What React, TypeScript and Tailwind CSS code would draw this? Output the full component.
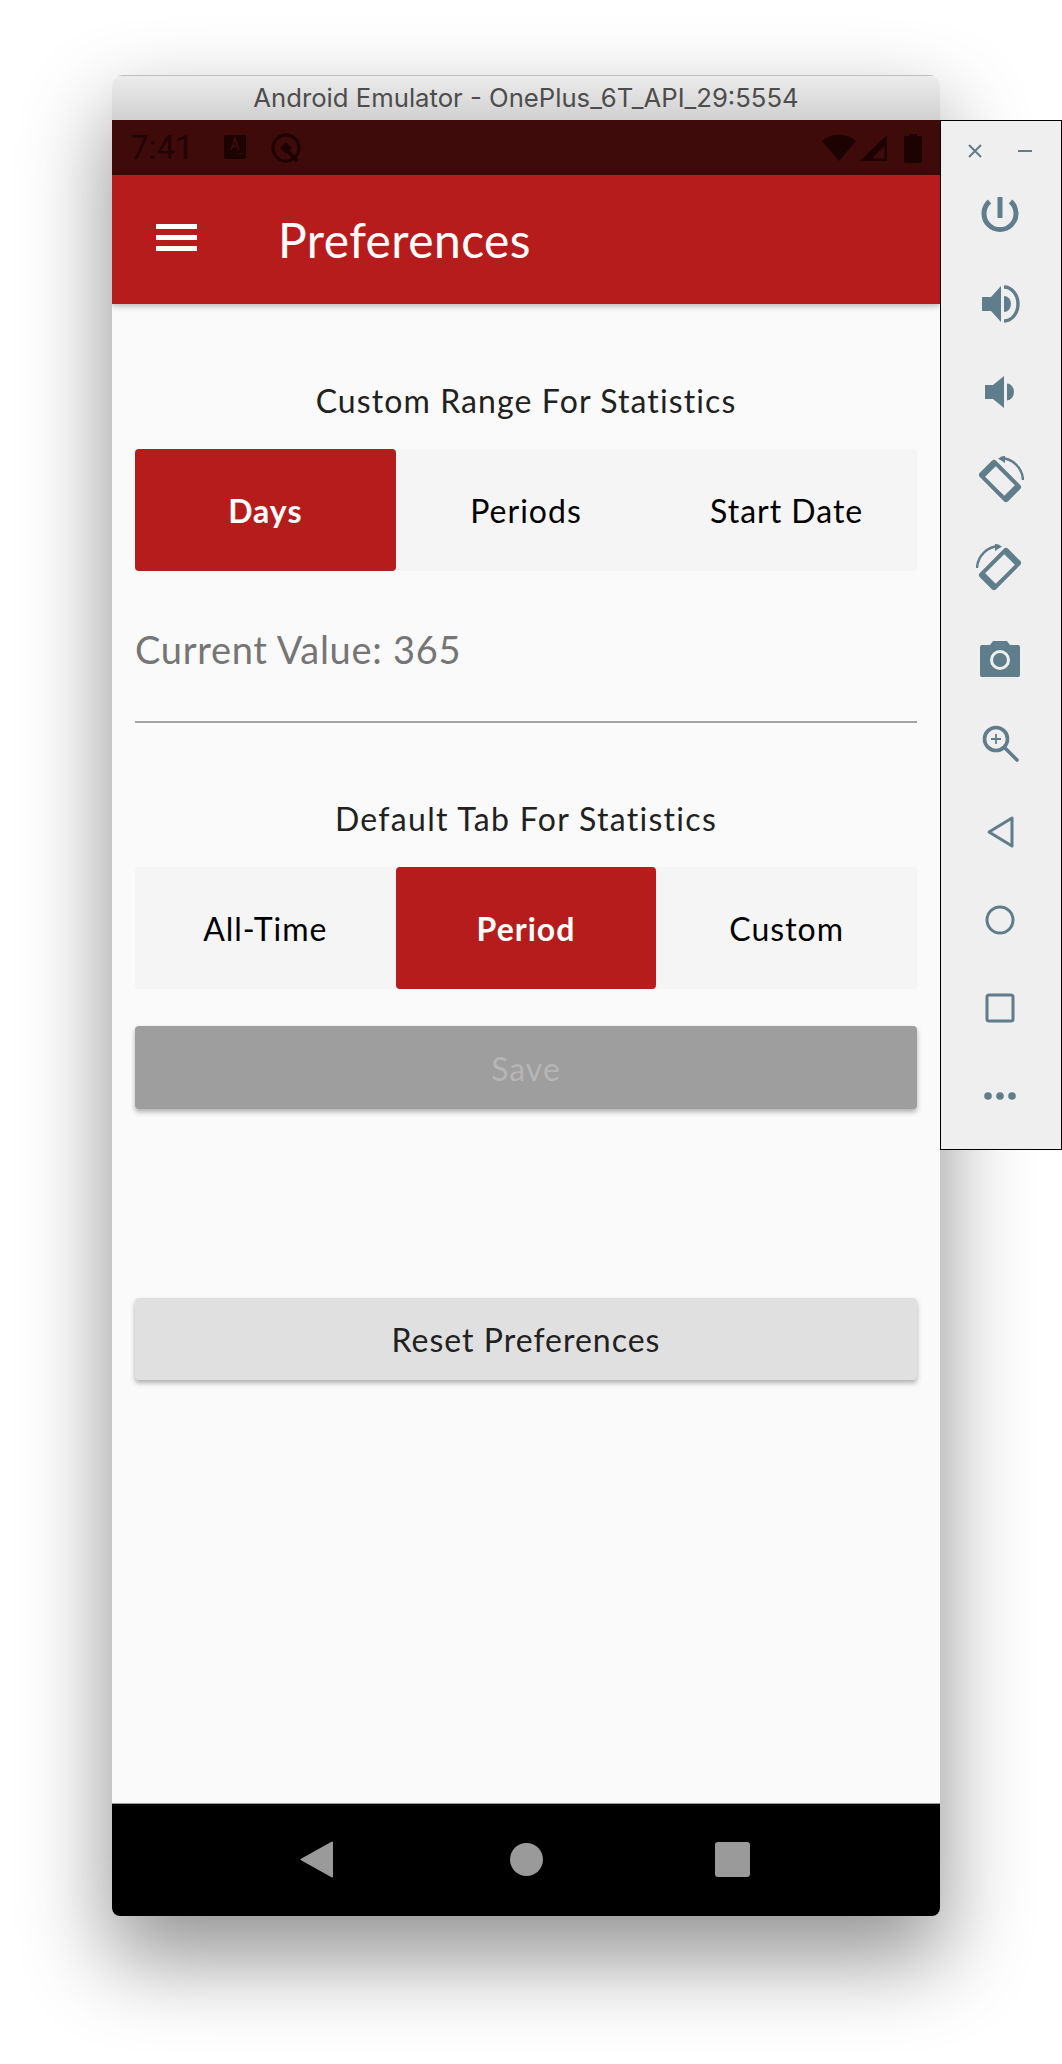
import React from "react";

const font = { fontFamily: "Lato, 'Open Sans', sans-serif" };

function I({ children, view = 48 }: { children: React.ReactNode; view?: number }) {
  return (
    <div className="h-[88px] flex items-center justify-center pr-[2px]">
      <svg width={view} height={view} viewBox={`0 0 ${view} ${view}`} fill="none">
        {children}
      </svg>
    </div>
  );
}

const C = "#607d8b";
const P = "#efefef";

function Rotate({ flip }: { flip?: boolean }) {
  return (
    <g transform={flip ? "translate(48 0) scale(-1 1)" : undefined}>
      <g transform="rotate(-45 24 25)">
        <rect x="12.5" y="5" width="23" height="40" rx="3" fill={C} />
        <rect x="16.5" y="11.5" width="15" height="27" fill={P} />
      </g>
      <path d="M24.5 2 A 23 23 0 0 1 47 24" stroke={C} strokeWidth="2.4" />
      <path d="M22 2.5 L29 -1 L29 7 Z" fill={C} />
    </g>
  );
}

function SideBar() {
  return (
    <aside className="relative z-10 mt-[45px] w-[122px] h-[1030px] bg-[#efefef] border border-black">
      <div className="h-[51px] flex items-center justify-center gap-[36px] pt-[8px] pr-[2px]">
        <svg width="14" height="14" viewBox="0 0 14 14"><path d="M1 1 L13 13 M13 1 L1 13" stroke={C} strokeWidth="2" /></svg>
        <div className="w-[14px] h-[2px] bg-[#607d8b]" />
      </div>
      <I>
        <path d="M13.5 9.5 A 16 16 0 1 0 34.5 9.5" stroke={C} strokeWidth="5" />
        <rect x="21.5" y="5" width="5" height="21" fill={C} />
      </I>
      <I>
        <path d="M6 17 H15 L25 6 V42 L15 31 H6 Z" fill={C} />
        <path d="M28 16 A 7 8 0 0 1 28 32 Z" fill={C} />
        <path d="M28 7 A 14 17 0 0 1 28 41" stroke={C} strokeWidth="3.4" />
      </I>
      <I>
        <path d="M9 17 H17 L28 8 V40 L17 31 H9 Z" fill={C} />
        <path d="M31 15.5 A 7 8.5 0 0 1 31 32.5 Z" fill={C} />
      </I>
      <I><Rotate /></I>
      <I><Rotate flip /></I>
      <I>
        <path d="M4 15 A2 2 0 0 1 6 13 H14 L17 9 H31 L34 13 H42 A2 2 0 0 1 44 15 V43 A2 2 0 0 1 42 45 H6 A2 2 0 0 1 4 43 Z" fill={C} />
        <circle cx="24" cy="28" r="8.5" stroke={P} strokeWidth="3" />
      </I>
      <I>
        <circle cx="20" cy="19" r="11.5" stroke={C} strokeWidth="3.6" />
        <path d="M15 19 H25 M20 14 V24" stroke={C} strokeWidth="1.8" />
        <path d="M28.5 27.5 L41 40" stroke={C} strokeWidth="3.6" strokeLinecap="round" />
      </I>
      <I>
        <path d="M36 10 V38 L13 24 Z" stroke={C} strokeWidth="3" strokeLinejoin="round" />
      </I>
      <I>
        <circle cx="24" cy="24" r="13" stroke={C} strokeWidth="3" />
      </I>
      <I>
        <rect x="11" y="11" width="26" height="26" rx="2" stroke={C} strokeWidth="3" />
      </I>
      <I>
        <circle cx="12" cy="24" r="3.8" fill={C} />
        <circle cx="24" cy="24" r="3.8" fill={C} />
        <circle cx="36" cy="24" r="3.8" fill={C} />
      </I>
    </aside>
  );
}

function StatusBar() {
  const d = "#1c0302";
  return (
    <div className="h-[55px] bg-[#3e0a0a] flex items-center pl-[18px] pr-[18px]">
      <span className="text-[33px] w-[94px] text-[#210504]" style={{ fontFamily: "Roboto, sans-serif" }}>7:41</span>
      <svg width="22" height="24" viewBox="0 0 22 24" className="mb-[1px]">
        <rect width="22" height="24" rx="2" fill={d} />
        <path d="M7 15 L11 4 L15 15 M8.5 11.5 H13.5" stroke="#3e0a0a" strokeWidth="1.8" fill="none" />
        <path d="M13 19 H19" stroke="#3e0a0a" strokeWidth="1.4" strokeDasharray="1.4 1" />
      </svg>
      <svg width="34" height="34" viewBox="0 0 34 34" className="ml-[23px]">
        <circle cx="17" cy="17" r="13" stroke={d} strokeWidth="3" fill="none" />
        <path d="M11 17 L17 11 L23 17 L17 23 Z" fill={d} />
        <path d="M18 19 L28 30" stroke={d} strokeWidth="3.5" />
      </svg>
      <div className="flex-1" />
      <svg width="34" height="29" viewBox="0 0 34 29"><path d="M0 8 Q17 -5 34 8 L17 28 Z" fill={d} /></svg>
      <svg width="30" height="29" viewBox="0 0 30 29" className="ml-[3px]">
        <path d="M1 28 L28 2 V28 Z M14 25.5 H25.5 V13 L14 24 Z" fill={d} fillRule="evenodd" />
      </svg>
      <svg width="18" height="30" viewBox="0 0 18 30" className="ml-[15px]">
        <path d="M5 3 V1 H13 V3 H16 A2 2 0 0 1 18 5 V28 A2 2 0 0 1 16 30 H2 A2 2 0 0 1 0 28 V5 A2 2 0 0 1 2 3 Z" fill={d} />
      </svg>
    </div>
  );
}

function Tabs({ items, active }: { items: string[]; active: number }) {
  return (
    <div className="grid grid-cols-3 h-[122px] rounded-[4px] bg-[#f5f5f5]">
      {items.map((t, i) => (
        <div
          key={t}
          className={
            i === active
              ? "flex items-center justify-center pt-[2px] rounded-[4px] bg-[#b71c1c] text-white text-[32px] tracking-[1px] font-bold"
              : "flex items-center justify-center pt-[2px] text-black text-[32px] tracking-[1px]"
          }
        >
          {t}
        </div>
      ))}
    </div>
  );
}

export default function App() {
  return (
    <div className="w-[1062px] h-[2064px] bg-white pt-[75px] pl-[112px] flex overflow-hidden" style={font}>
      <main className="w-[828px] h-[1841px] flex flex-col rounded-t-[10px] rounded-b-[8px] overflow-hidden shadow-[0_40px_85px_4px_rgba(0,0,0,0.42)]">
        <div
          className="h-[45px] shrink-0 flex items-center justify-center bg-gradient-to-b from-[#ececec] to-[#d0d0d0] border-t border-[#c0c0c0] text-[#4d4d4d] text-[25.7px]"
          style={{ fontFamily: "Inter, 'Liberation Sans', sans-serif" }}
        >
          Android Emulator - OnePlus_6T_API_29:5554
        </div>
        <StatusBar />
        <header className="relative z-10 h-[129px] shrink-0 bg-[#b71c1c] flex items-center pl-[44px] shadow-[0_2px_6px_rgba(0,0,0,0.28)]">
          <div className="w-[41px] flex flex-col gap-[6px] mb-[4px]">
            <div className="h-[5px] bg-white" />
            <div className="h-[5px] bg-white" />
            <div className="h-[5px] bg-white" />
          </div>
          <h1 className="ml-[81px] text-[48px] tracking-[0.4px] text-white font-normal">Preferences</h1>
        </header>
        <section className="flex-1 bg-[#fafafa] pl-[23px] pr-[23px] pt-[77px]">
          <div className="h-[40px] flex items-center justify-center text-[#212121] text-[32px] tracking-[1.1px]">Custom Range For Statistics</div>
          <div className="mt-[28px]"><Tabs items={["Days", "Periods", "Start Date"]} active={0} /></div>
          <div className="pt-[53px] pb-[47px] border-b-2 border-[#a3a3a3] text-[38px] tracking-[0.7px] leading-[50px] text-[#757575]">Current Value: 365</div>
          <div className="mt-[76px] h-[40px] flex items-center justify-center text-[#212121] text-[32px] tracking-[1.3px]">Default Tab For Statistics</div>
          <div className="mt-[28px]"><Tabs items={["All-Time", "Period", "Custom"]} active={1} /></div>
          <div className="mt-[37px] h-[83px] pt-[2px] rounded-[4px] bg-[#9e9e9e] flex items-center justify-center text-[#b5b5b5] text-[32px] tracking-[1px] shadow-[0_3px_5px_rgba(0,0,0,0.3)]">Save</div>
          <div className="mt-[189px] h-[82px] pt-[2px] rounded-[4px] bg-[#e0e0e0] flex items-center justify-center text-[#212121] text-[32px] tracking-[1px] shadow-[0_3px_5px_rgba(0,0,0,0.3)]">Reset Preferences</div>
        </section>
        <nav className="h-[113px] shrink-0 bg-black border-t border-[#999] flex items-center pb-[2px] pl-[188px]">
          <svg width="33" height="37" viewBox="0 0 33 37"><path d="M32 1.5 V35.5 L1.5 18.5 Z" fill="#9a9a9a" stroke="#9a9a9a" strokeWidth="2" strokeLinejoin="round" /></svg>
          <div className="ml-[177px] w-[33px] h-[33px] rounded-full bg-[#9a9a9a]" />
          <div className="ml-[172px] w-[35px] h-[35px] rounded-[3px] bg-[#9a9a9a]" />
        </nav>
      </main>
      <SideBar />
    </div>
  );
}
